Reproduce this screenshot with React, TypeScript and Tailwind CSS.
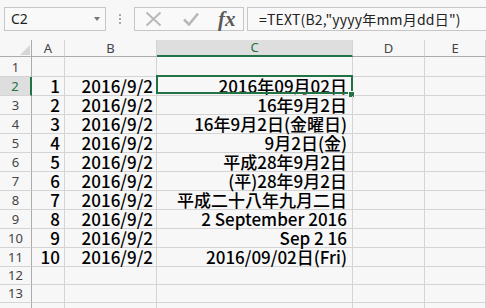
import React from 'react'

const ROWS: { a: string; b: string; c: string }[] = [
  { a: '', b: '', c: '' },
  { a: '1', b: '2016/9/2', c: '2016年09月02日' },
  { a: '2', b: '2016/9/2', c: '16年9月2日' },
  { a: '3', b: '2016/9/2', c: '16年9月2日(金曜日)' },
  { a: '4', b: '2016/9/2', c: '9月2日(金)' },
  { a: '5', b: '2016/9/2', c: '平成28年9月2日' },
  { a: '6', b: '2016/9/2', c: '(平)28年9月2日' },
  { a: '7', b: '2016/9/2', c: '平成二十八年九月二日' },
  { a: '8', b: '2016/9/2', c: '2 September 2016' },
  { a: '9', b: '2016/9/2', c: 'Sep 2 16' },
  { a: '10', b: '2016/9/2', c: '2016/09/02日(Fri)' },
  { a: '', b: '', c: '' },
  { a: '', b: '', c: '' },
  { a: '', b: '', c: '' },
]

const CELL_FONT = { fontFamily: '"Noto Sans CJK JP", "Noto Sans", sans-serif' }
const UI_FONT = { fontFamily: '"Noto Sans", "Liberation Sans", "Noto Sans CJK JP", sans-serif' }

function rowHeight(i: number) {
  if (i === 0) return 'h-[20px]'
  if (i <= 10) return 'h-[19px]'
  return 'h-[18px]'
}

export default function App() {
  return (
    <div className="w-[486px] h-[308px] overflow-hidden bg-[#f7f7f7] text-black">
      {/* Formula bar */}
      <div className="h-[40px] flex items-start pt-[7px]" style={UI_FONT}>
        <div className="ml-[4px] w-[102px] h-[24px] border border-[#c6c6c6] bg-[#f9f9f9] flex items-center justify-between pl-[6px] pr-[5px]">
          <span className="text-[14px] text-[#222] leading-none">C2</span>
          <span className="w-0 h-0 border-l-[3.5px] border-r-[3.5px] border-t-[4px] border-l-transparent border-r-transparent border-t-[#777]" />
        </div>
        <div className="ml-[13px] mt-[7px] flex flex-col gap-[2px]">
          <span className="w-[2px] h-[2px] bg-[#a8a8a8]" />
          <span className="w-[2px] h-[2px] bg-[#a8a8a8]" />
          <span className="w-[2px] h-[2px] bg-[#a8a8a8]" />
        </div>
        <div className="ml-[13px] w-[110px] h-[24px] border border-[#c6c6c6] bg-[#f9f9f9] flex items-center">
          <svg className="ml-[10px]" width="17" height="16" viewBox="0 0 17 16">
            <path d="M1.5 1.5 L15.5 14.5 M15.5 1.5 L1.5 14.5" stroke="#b8b8b8" strokeWidth="2" fill="none" />
          </svg>
          <svg className="ml-[21px]" width="16" height="14" viewBox="0 0 16 14">
            <path d="M1 7.5 L6 12.5 L15 1.5" stroke="#b8b8b8" strokeWidth="2.6" fill="none" />
          </svg>
          <span
            className="ml-[19px] text-[21px] italic font-bold text-[#5a5a5a] leading-none"
            style={{ fontFamily: '"Liberation Serif", "DejaVu Serif", serif' }}
          >
            fx
          </span>
        </div>
        <div className="ml-[3px] flex-1 h-[24px] border border-r-0 border-[#c6c6c6] bg-[#f9f9f9] flex items-center pl-[11px]">
          <span className="text-[14px] text-[#222] leading-none tracking-[0.2px]" style={CELL_FONT}>
            =TEXT(B2,"yyyy年mm月dd日")
          </span>
        </div>
      </div>

      {/* Sheet */}
      <div className="grid grid-cols-[32px_33px_92px_196px_72px_61px]" style={UI_FONT}>
        {/* column header row */}
        <div className="h-[17px] border-r border-b border-[#ababab] relative">
          <svg className="absolute left-[20px] top-[5px]" width="10" height="10" viewBox="0 0 10 10">
            <path d="M10 0 L10 10 L0 10 Z" fill="#d6d6d6" />
          </svg>
        </div>
        {['A', 'B', 'C', 'D', 'E'].map((c) => (
          <div
            key={c}
            className={
              c === 'C'
                ? 'h-[17px] border-r border-[#d4d4d4] border-b-2 border-b-[#217346] bg-[#dedede] flex items-center justify-center text-[13px] text-[#217346] leading-none'
                : 'h-[17px] border-r border-b border-[#d4d4d4] border-b-[#ababab] flex items-center justify-center text-[13px] text-[#444] leading-none'
            }
          >
            {c}
          </div>
        ))}

        {ROWS.map((r, i) => {
          const h = rowHeight(i)
          const sel = i === 1
          return (
            <React.Fragment key={i}>
              <div
                className={
                  sel
                    ? `${h} border-b border-[#d4d4d4] border-r-2 border-r-[#217346] bg-[#dedede] flex items-end justify-center pb-[2px] text-[13px] text-[#217346] leading-none`
                    : `${h} border-b border-[#d4d4d4] border-r border-r-[#ababab] flex items-end justify-center pb-[2px] text-[13px] text-[#444] leading-none`
                }
              >
                {i < 13 ? i + 1 : ''}
              </div>
              <div className={`${h} border-r border-b border-[#d4d4d4] flex items-end justify-end pr-[4px] pb-[1px] text-[17px] font-medium leading-none`} style={CELL_FONT}>
                {r.a}
              </div>
              <div className={`${h} border-r border-b border-[#d4d4d4] flex items-end justify-end pr-[3px] pb-[1px] text-[17px] font-medium leading-none`} style={CELL_FONT}>
                {r.b}
              </div>
              <div className={`${h} border-r border-b border-[#d4d4d4] flex items-end justify-end pr-[5px] pb-[1px] text-[17px] font-medium leading-none relative`} style={CELL_FONT}>
                {r.c}
                {sel && (
                  <>
                    <span className="absolute -left-[1px] -top-[2px] -right-[1px] bottom-[1px] border-2 border-[#217346]" />
                    <span className="absolute -right-[3px] -bottom-[3px] w-[7px] h-[7px] bg-[#217346] border border-[#f7f7f7]" />
                  </>
                )}
              </div>
              <div className={`${h} border-r border-b border-[#d4d4d4]`} />
              <div className={`${h} border-r border-b border-[#d4d4d4]`} />
            </React.Fragment>
          )
        })}
      </div>
    </div>
  )
}
